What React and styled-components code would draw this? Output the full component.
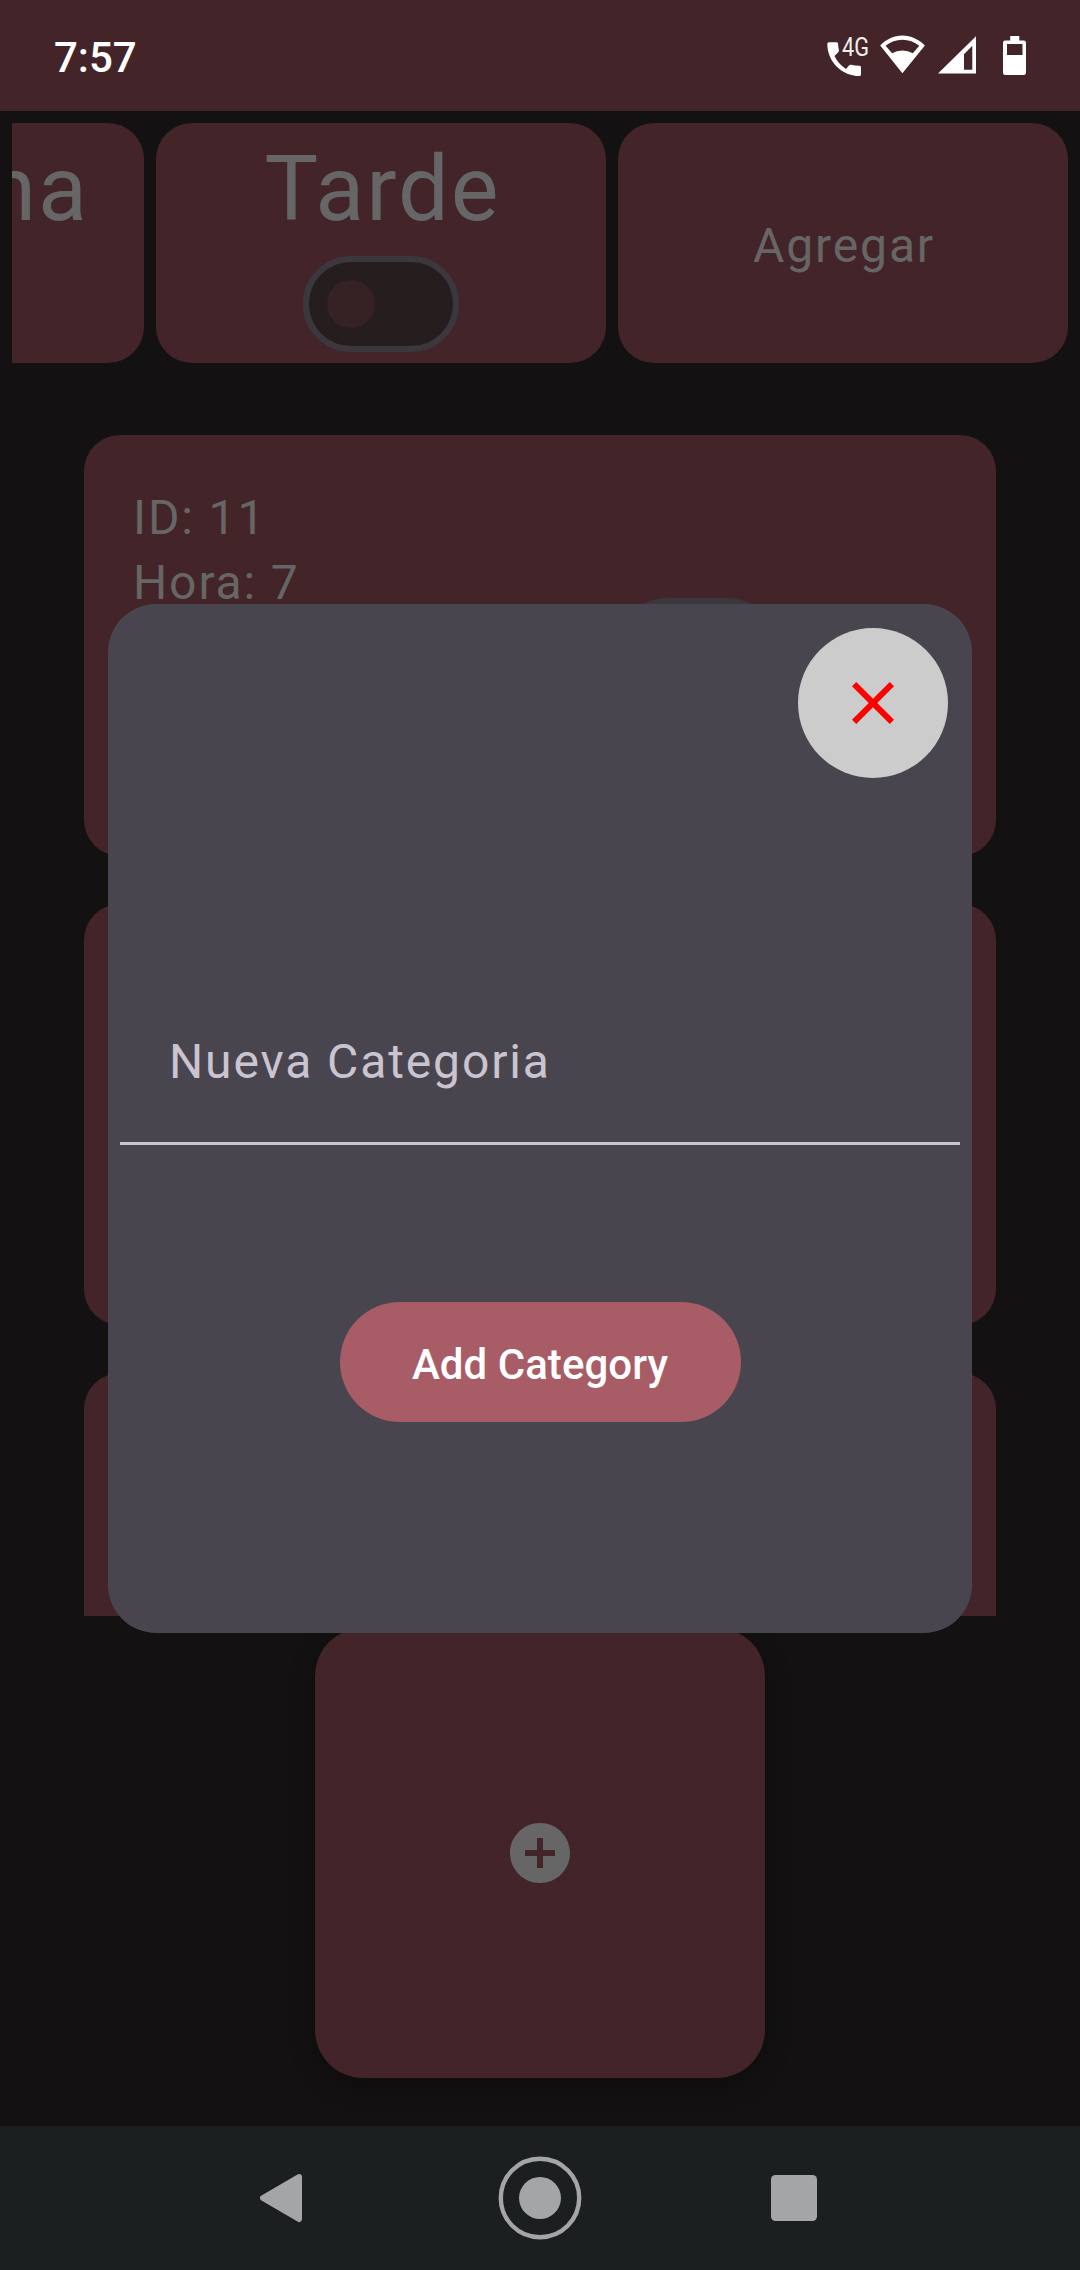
import React from 'react';
import styled, { createGlobalStyle } from 'styled-components';

const GlobalStyle = createGlobalStyle`
  *, *::before, *::after { box-sizing: border-box; }
  body { margin: 0; background: #131112; }
  button { font: inherit; border: 0; padding: 0; }
`;

const Screen = styled.div`
  position: relative;
  width: 1080px;
  height: 2270px;
  display: flex;
  flex-direction: column;
  overflow: hidden;
  background: #131112;
  color: #666666;
  font-family: Roboto, "Noto Sans", sans-serif;
  font-size: 48px;
  letter-spacing: 1.88px;
`;

const StatusBar = styled.header`
  display: flex;
  align-items: center;
  justify-content: space-between;
  flex: none;
  height: 111px;
  padding: 1px 54px 0;
  background: #432429;
`;

const Clock = styled.time`
  color: #fff;
  font-size: 42px;
  font-weight: 500;
  line-height: 50px;
  letter-spacing: 0;
  padding-top: 4px;
`;

const StatusIcons = styled.svg`
  width: 204px;
  height: 48px;
  fill: #fff;
`;

const NetworkLabel = styled.text`
  font-size: 26px;
  font-weight: 400;
  letter-spacing: 0;
  opacity: 0.92;
`;

const Content = styled.main`
  flex: 1;
  display: flex;
  flex-direction: column;
  align-items: center;
  min-height: 0;
`;

const CategoryRow = styled.div`
  display: flex;
  justify-content: flex-end;
  align-self: stretch;
  gap: 12px;
  margin: 12px;
  height: 240px;
  overflow: hidden;
`;

const CategoryCard = styled.section`
  flex: none;
  width: 450px;
  height: 240px;
  display: flex;
  flex-direction: column;
  align-items: center;
  justify-content: ${(p) => (p.$centered ? 'center' : 'flex-start')};
  padding-top: ${(p) => (p.$centered ? '6px' : '13px')};
  border-radius: 36px;
  background: #432429;
`;

const CategoryName = styled.h2`
  margin: 0;
  padding-left: 3px;
  font-size: 90px;
  font-weight: 400;
  line-height: 108px;
  letter-spacing: 2px;
`;

const ActionLabel = styled.span`
  padding-left: 2px;
  line-height: 64px;
`;

const Toggle = styled.span`
  display: flex;
  align-items: center;
  flex: none;
  width: 156px;
  height: 96px;
  margin-top: ${(p) => p.$gap || '0'};
  padding-left: 18px;
  border: 6px solid #3a383d;
  border-radius: 48px;
  background: #261d1e;

  &::before {
    content: '';
    width: 48px;
    height: 48px;
    border-radius: 50%;
    background: #362225;
  }
`;

const AlarmList = styled.div`
  flex: none;
  display: flex;
  flex-direction: column;
  gap: 48px;
  width: 912px;
  height: 1181px;
  margin-top: 60px;
  overflow: hidden;
`;

const AlarmCard = styled.article`
  flex: none;
  display: flex;
  justify-content: space-between;
  align-items: flex-start;
  height: 421px;
  padding: 50px 221px 0 49px;
  border-radius: 36px;
  background: #432429;
`;

const AlarmText = styled.p`
  margin: 0;
  line-height: 65px;
`;

const AddTile = styled.button`
  flex: none;
  display: flex;
  align-items: center;
  justify-content: center;
  width: 450px;
  height: 450px;
  margin-top: 12px;
  border-radius: 48px;
  background: #432429;
  box-shadow: 0 8px 22px rgba(14, 14, 10, 0.75);
`;

const Icon = styled.svg`
  width: 72px;
  height: 72px;
  fill: ${(p) => p.$color};
`;

const Dialog = styled.div`
  position: absolute;
  top: 604px;
  left: 108px;
  width: 864px;
  height: 1029px;
  display: flex;
  flex-direction: column;
  align-items: center;
  padding: 24px 12px 0;
  border-radius: 48px;
  background: #49454f;
`;

const CloseButton = styled.button`
  display: flex;
  align-items: center;
  justify-content: center;
  align-self: flex-end;
  width: 150px;
  height: 150px;
  margin-right: 12px;
  border-radius: 50%;
  background: #cccccc;
`;

const Field = styled.div`
  align-self: stretch;
  display: flex;
  align-items: center;
  height: 168px;
  margin-top: 199px;
  padding: 4px 49px 0;
  border-bottom: 3px solid #cac4d0;
  color: #cac4d0;
`;

const SubmitButton = styled.button`
  width: 401px;
  height: 120px;
  margin-top: 157px;
  padding-top: 4px;
  border-radius: 60px;
  background: #a85c65;
  color: #fff;
  font-size: 42px;
  font-weight: 500;
  letter-spacing: 0.05px;
`;

const NavBar = styled.nav`
  flex: none;
  display: flex;
  align-items: center;
  height: 144px;
  padding-left: 260px;
  background: #1b1f20;
`;

const NavIcon = styled.svg`
  flex: none;
  height: 84px;
  width: ${(p) => p.$width}px;
  margin-left: ${(p) => p.$gap || 0}px;
  fill: #a4a5a7;
  stroke: #a4a5a7;
`;

function StatusGlyphs() {
  return (
    <StatusIcons viewBox="822 32 204 48">
      <path d="M828.8 42.3H836.6q1.2 0 1.4 1.2.2 3.6.9 6.6.3 1.3-.7 2.1L834.5 56C836.8 61 841 66 846 68.9L849 65.4q.8-.9 2-.6 3.600.8 8.600.9 1.400.1 1.400 1.500V74.600q0 1.500-1.700 1.500C841.500 75.500 827.400 61.500 827.300 43.900q0-1.600 1.500-1.600z" />
      <NetworkLabel x="842" y="55.5" textLength="27" lengthAdjust="spacingAndGlyphs">4G</NetworkLabel>
      <path fillRule="evenodd" d="M902.4 73.3L880.2 45.6C886 39.5 894 35.6 902.4 35.6s16.5 3.9 22.5 10zM892.1 53.2q4.4-2.8 10.3-2.8t10.4 2.8l6.5-7.5c-5-3.8-10.6-5.9-16.9-5.9s-11.9 2.1-16.8 5.9z" />
      <path fillRule="evenodd" d="M976 36.2v37.2h-38zM972.3 45.8L964 54.2v15.5h8.3z" />
      <path fillRule="evenodd" d="M1010.2 36h9.1v4.5h4.5q2.2 0 2.2 2.2v30q0 2.2-2.2 2.2h-18.6q-2.2 0-2.2-2.2v-30q0-2.2 2.2-2.2h5zM1007 44v11h15.5V44z" />
    </StatusIcons>
  );
}

export default function App() {
  return (
    <>
      <GlobalStyle />
      <Screen>
        <StatusBar>
          <Clock>7:57</Clock>
          <StatusGlyphs />
        </StatusBar>
        <Content>
          <CategoryRow>
            <CategoryCard>
              <CategoryName>Mañana</CategoryName>
            </CategoryCard>
            <CategoryCard>
              <CategoryName>Tarde</CategoryName>
              <Toggle $gap="12px" />
            </CategoryCard>
            <CategoryCard $centered>
              <ActionLabel>Agregar</ActionLabel>
            </CategoryCard>
          </CategoryRow>
          <AlarmList>
            <AlarmCard>
              <div>
                <AlarmText>ID: 11</AlarmText>
                <AlarmText>Hora: 7</AlarmText>
              </div>
              <Toggle $gap="113px" />
            </AlarmCard>
            <AlarmCard />
            <AlarmCard />
          </AlarmList>
          <AddTile aria-label="Add">
            <Icon viewBox="0 0 24 24" $color="#666666">
              <path d="M12 2C6.48 2 2 6.48 2 12s4.48 10 10 10 10-4.48 10-10S17.52 2 12 2zm5 11h-4v4h-2v-4H7v-2h4V7h2v4h4v2z" />
            </Icon>
          </AddTile>
        </Content>
        <NavBar>
          <NavIcon $width="42" viewBox="0 0 42 84">
            <path d="M39 21L3 42l36 21z" strokeWidth="6" strokeLinejoin="round" />
          </NavIcon>
          <NavIcon $width="84" $gap="196" viewBox="0 0 84 84">
            <circle cx="42" cy="42" r="39.2" fill="none" strokeWidth="4.4" />
            <circle cx="42" cy="42" r="21" stroke="none" />
          </NavIcon>
          <NavIcon $width="46" $gap="189" viewBox="0 0 46 84">
            <rect y="19" width="46" height="46" rx="4.5" stroke="none" />
          </NavIcon>
        </NavBar>
        <Dialog role="dialog">
          <CloseButton aria-label="Close">
            <Icon viewBox="0 0 24 24" $color="#ff0000">
              <path d="M19 6.41L17.59 5 12 10.59 6.41 5 5 6.41 10.59 12 5 17.59 6.41 19 12 13.41 17.59 19 19 17.59 13.41 12z" />
            </Icon>
          </CloseButton>
          <Field>Nueva Categoria</Field>
          <SubmitButton>Add Category</SubmitButton>
        </Dialog>
      </Screen>
    </>
  );
}
